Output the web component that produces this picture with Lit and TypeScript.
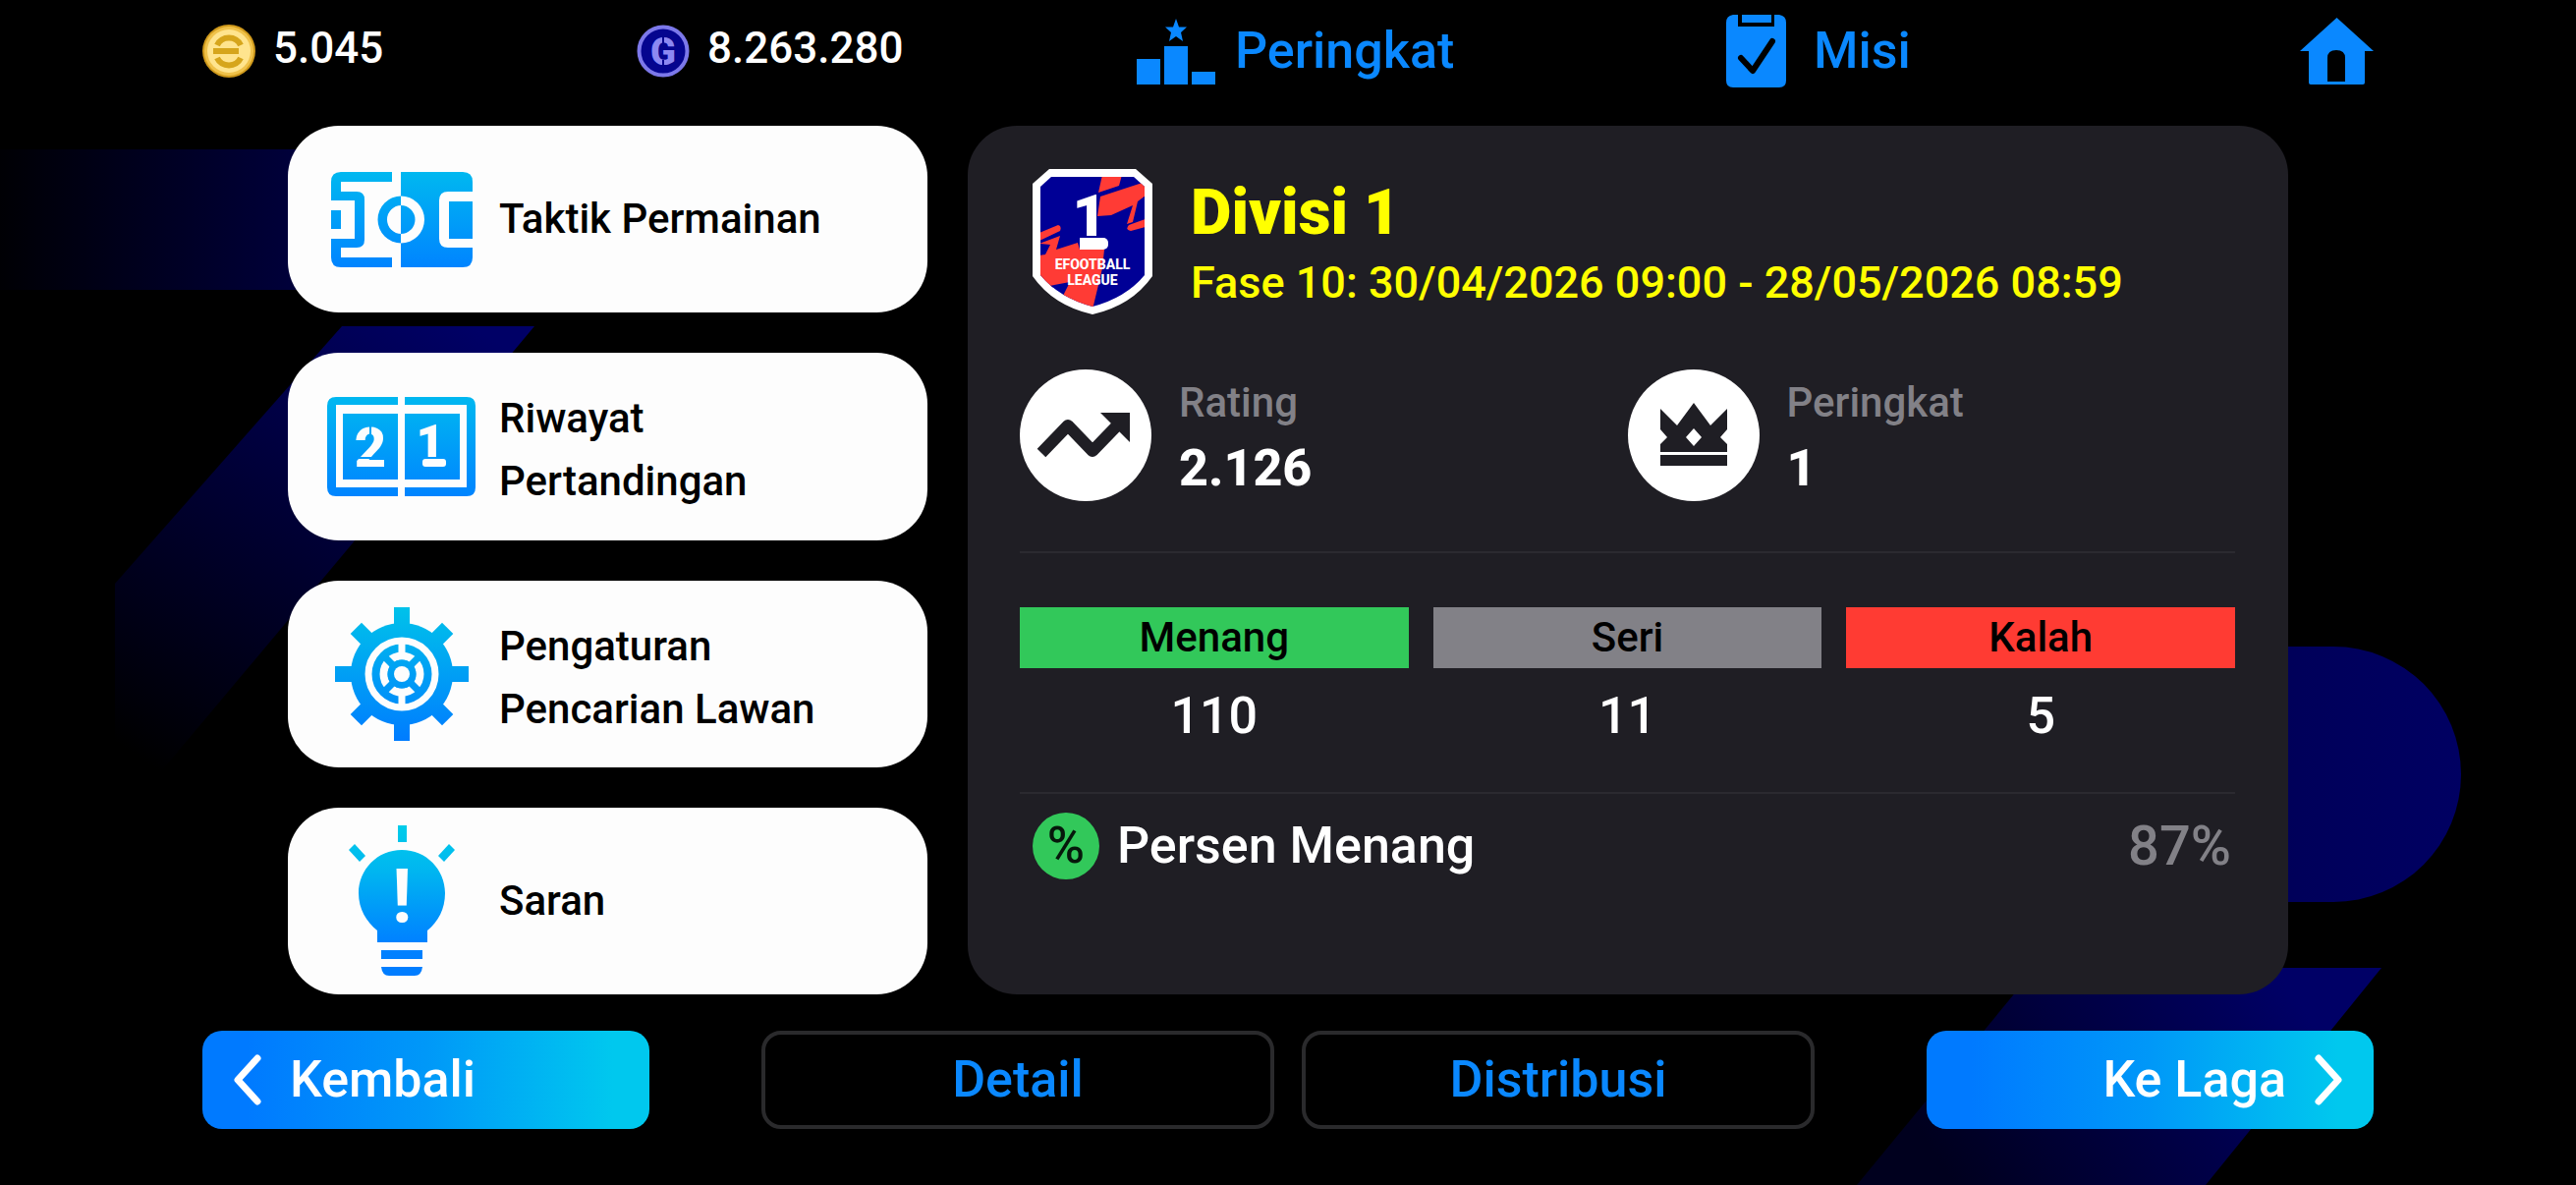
import { LitElement, html, css } from "lit";
import { customElement, property } from "lit/decorators.js";

const pitchIcon = html`
  <svg width="144" height="97" viewBox="0 0 144 97" aria-hidden="true">
    <defs>
      <linearGradient id="pitch" gradientUnits="userSpaceOnUse" x1="0" y1="0" x2="0" y2="97">
        <stop offset="0" stop-color="#00b8f0" />
        <stop offset="1" stop-color="#0084ff" />
      </linearGradient>
    </defs>
    <g fill="url(#pitch)">
      <path d="M62 0H10Q0 0 0 10V29H24V68H0V87Q0 97 10 97H62V87H10V77H26Q34 77 34 69V28Q34 20 26 20H10V10H62Z" />
      <rect x="0" y="39" width="10" height="19" />
      <path fill-rule="evenodd" d="M71 0H134Q144 0 144 10V20H119Q110 20 110 29V68Q110 77 119 77H144V87Q144 97 134 97H71Z" />
      <rect x="120" y="30" width="24" height="38" />
      <path d="M71.5 24.5A24 24 0 0 0 71.5 72.5V63A14.5 14.5 0 0 1 71.5 34Z" />
    </g>
    <path fill="#fdfdfd" d="M71 24.5A24 24 0 0 1 71 72.5V63A14.5 14.5 0 0 0 71 34Z" />
  </svg>`;

const scoreIcon = html`
  <svg width="151" height="101" viewBox="0 0 151 101" aria-hidden="true">
    <defs>
      <linearGradient id="score" gradientUnits="userSpaceOnUse" x1="0" y1="0" x2="0" y2="101">
        <stop offset="0" stop-color="#00b8f0" />
        <stop offset="1" stop-color="#0084ff" />
      </linearGradient>
    </defs>
    <g fill="url(#score)">
      <path d="M72 0H9Q0 0 0 9V92Q0 101 9 101H72V92H9V8H72Z" />
      <path d="M79 0H142Q151 0 151 9V92Q151 101 142 101H79V92H142V8H79Z" />
      <rect x="16" y="17" width="56" height="67" />
      <rect x="79" y="17" width="56" height="67" />
    </g>
    <g class="digits">
      <text x="44" y="71">2</text>
      <text x="105" y="64" class="one">1</text>
    </g>
    <rect x="97" y="63" width="24" height="8" rx="3" fill="#fdfdfd" />
    <rect x="31" y="61" width="28" height="2" fill="#0398fb" />
    <rect x="95" y="61" width="28" height="2" fill="#0398fb" />
    <rect x="43" y="28" width="2" height="10" fill="#02a5f6" />
  </svg>`;

const gearIcon = html`
  <svg width="136" height="136" viewBox="-68 -68 136 136" aria-hidden="true">
    <defs>
      <linearGradient id="gear" gradientUnits="userSpaceOnUse" x1="0" y1="-68" x2="0" y2="68">
        <stop offset="0" stop-color="#00c2ea" />
        <stop offset="1" stop-color="#007cff" />
      </linearGradient>
      <mask id="gearMask" maskUnits="userSpaceOnUse" x="-70" y="-70" width="140" height="140">
        <g fill="#fff">
          <circle r="52" />
          <rect x="-8" y="-68" width="16" height="136" />
          <rect x="-68" y="-8" width="136" height="16" />
          <rect x="-8" y="-66" width="16" height="132" transform="rotate(45)" />
          <rect x="-8" y="-66" width="16" height="132" transform="rotate(-45)" />
        </g>
        <circle r="34" fill="none" stroke="#000" stroke-width="7" />
        <path d="M0 -36V-18M0 18V36" stroke="#000" stroke-width="7" />
        <circle r="18.5" fill="none" stroke="#000" stroke-width="8" />
        <path d="M-20 -20L20 20M-20 20L20 -20" stroke="#fff" stroke-width="7" />
        <circle r="14.5" fill="#fff" />
        <circle r="8" fill="#000" />
      </mask>
    </defs>
    <rect x="-68" y="-68" width="136" height="136" fill="url(#gear)" mask="url(#gearMask)" />
  </svg>`;

const bulbIcon = html`
  <svg width="110" height="153" viewBox="0 0 110 153" aria-hidden="true">
    <defs>
      <linearGradient id="bulb" gradientUnits="userSpaceOnUse" x1="0" y1="0" x2="0" y2="153">
        <stop offset="0" stop-color="#00cdea" />
        <stop offset="0.3" stop-color="#00b6f0" />
        <stop offset="0.75" stop-color="#0084ff" />
        <stop offset="1" stop-color="#007cff" />
      </linearGradient>
    </defs>
    <g fill="url(#bulb)">
      <rect x="51" y="0" width="9" height="17" />
      <path d="M1 25L7 19L18 31L12 37Z" />
      <path d="M109 25L103 19L92 31L98 37Z" />
      <path d="M55 25C80 25 99 45 99 69C99 85 92 98 81 107V119H30V107C19 98 11 85 11 69C11 45 30 25 55 25Z" />
      <rect x="34" y="127" width="42" height="9" />
      <path d="M34 144H76Q75 153 68 153H42Q35 153 34 144Z" />
    </g>
    <text class="bang" x="55" y="98">!</text>
  </svg>`;

const trendIcon = html`
  <svg width="134" height="134" viewBox="0 0 134 134" aria-hidden="true">
    <circle cx="67" cy="67" r="67" fill="#fff" />
    <path d="M22 85L49 57L74 83L104 52" fill="none" stroke="#1f1e24" stroke-width="12" stroke-linejoin="round" />
    <path d="M82 44H112V74Z" fill="#1f1e24" />
  </svg>`;

const crownIcon = html`
  <svg width="134" height="134" viewBox="0 0 134 134" aria-hidden="true">
    <circle cx="67" cy="67" r="67" fill="#fff" />
    <path
      fill="#1f1e24"
      fill-rule="evenodd"
      d="M33 40L50 57L67 34L84 57L101 40V61L94 69L101 76V84H33V76L40 69L33 61ZM67 60L59 69L67 78L75 69Z"
    />
    <rect x="33" y="87" width="68" height="11" fill="#1f1e24" />
  </svg>`;

const leagueBadge = html`
  <svg class="badge" width="122" height="148" viewBox="0 0 122 148" role="img" aria-label="eFootball League 1">
    <defs>
      <clipPath id="shield">
        <path d="M8 18L19 8H103L114 18V108Q95 131 61 140Q27 131 8 108Z" />
      </clipPath>
    </defs>
    <path fill="#fff" d="M0 15L17 0H105L122 15V109Q101 139 61 148Q21 139 0 109Z" />
    <g clip-path="url(#shield)">
      <rect width="122" height="148" fill="#000096" />
      <g fill="#ff3b35">
        <path d="M71 6H91L88 17L67 24Z" />
        <path d="M69 28L115 13V27L107 33L102 54L96 56L102 37L80 47L66 48Z" />
        <path d="M98 57L115 51V59L100 63Q94 62 98 57Z" />
        <path d="M7 65L26 57Q30 58 28 63L7 73Z" />
        <path d="M7 76L28 68L24 82L46 75L48 82H73L71 101L67 118L61 143L30 131L38 115L22 118L15 126L7 116V88L13 87L18 77Z" />
      </g>
      <path d="M8 121L22 118L18 128Z" fill="#000096" />
    </g>
    <text class="badge-number" x="58" y="68">1</text>
    <rect x="48" y="70" width="29" height="12" rx="5" fill="#fff" />
    <rect x="48" y="70" width="12" height="12" fill="#fff" />
    <text class="badge-name" x="61" y="102">EFOOTBALL</text>
    <text class="badge-name" x="61" y="118">LEAGUE</text>
  </svg>`;

const goldCoin = html`
  <svg width="54" height="54" viewBox="-27 -27 54 54" aria-hidden="true">
    <circle r="27" fill="#d09a1c" />
    <circle r="25" fill="#f0c24a" />
    <circle r="22" fill="#ffe48e" />
    <g fill="none" stroke="#d6a51c" stroke-width="6">
      <path d="M-12 -6A13 12 0 0 1 12 -6" />
      <path d="M-12 7A13 12 0 0 0 12 7" />
      <path d="M-16 0H10" />
    </g>
  </svg>`;

const gCoin = html`
  <svg width="54" height="54" viewBox="-27 -27 54 54" aria-hidden="true">
    <circle r="24.5" fill="#05058f" stroke="#7c78ea" stroke-width="4" />
    <text class="coin-letter" x="0" y="14">G</text>
    <path d="M0 -16V-8M0 9V17" stroke="#05058f" stroke-width="2" />
  </svg>`;

const podiumIcon = html`
  <svg width="80" height="67" viewBox="0 0 80 67" aria-hidden="true">
    <g fill="#0a88ff">
      <rect x="0" y="41" width="24" height="26" />
      <rect x="28" y="28" width="24" height="39" />
      <rect x="56" y="54" width="24" height="13" />
      <path d="M40 0L43 8.5H51L45 14L47 23L40 18L33 23L35 14L29 8.5H37Z" />
    </g>
  </svg>`;

const clipboardIcon = html`
  <svg width="61" height="74" viewBox="0 0 61 74" aria-hidden="true">
    <path fill="#0a88ff" d="M7 0H12V12H49V0H54Q61 1 61 8V67Q61 74 54 74H7Q0 74 0 67V8Q0 1 7 0Z" />
    <rect x="16" y="0" width="30" height="8" fill="#0a88ff" />
    <path d="M15 44L27 57L47 27" fill="none" stroke="#000" stroke-width="6" stroke-linejoin="round" stroke-linecap="round" />
  </svg>`;

const homeIcon = html`
  <svg width="75" height="68" viewBox="0 0 75 68" aria-hidden="true">
    <path
      fill="#0a88ff"
      fill-rule="evenodd"
      d="M37.5 0L75 34H66V66Q66 68 64 68H11Q9 68 9 66V34H0ZM28 65H46V41Q46 33 37 33Q28 33 28 41Z"
    />
  </svg>`;

const chevron = (d: string) => html`
  <svg width="32" height="56" viewBox="0 0 32 56" aria-hidden="true">
    <path d=${d} fill="none" stroke="#fff" stroke-width="7" stroke-linecap="round" stroke-linejoin="round" />
  </svg>`;

const actions = [
  { icon: pitchIcon, lines: ["Taktik Permainan"] },
  { icon: scoreIcon, lines: ["Riwayat", "Pertandingan"] },
  { icon: gearIcon, lines: ["Pengaturan", "Pencarian Lawan"] },
  { icon: bulbIcon, lines: ["Saran"] },
];

const results = [
  { label: "Menang", value: "110", tone: "win" },
  { label: "Seri", value: "11", tone: "draw" },
  { label: "Kalah", value: "5", tone: "loss" },
];

@customElement("app-backdrop")
class AppBackdrop extends LitElement {
  static styles = css`
    :host {
      position: absolute;
      inset: 0;
      z-index: -1;
    }
    svg {
      display: block;
      width: 100%;
      height: 100%;
    }
  `;

  render() {
    return html`
      <svg viewBox="0 0 2622 1206" preserveAspectRatio="none" aria-hidden="true">
        <defs>
          <linearGradient id="bar" gradientUnits="userSpaceOnUse" x1="0" y1="0" x2="320" y2="0">
            <stop offset="0" stop-color="#000004" />
            <stop offset="1" stop-color="#00003e" />
          </linearGradient>
          <linearGradient id="slash" gradientUnits="userSpaceOnUse" x1="450" y1="310" x2="140" y2="770">
            <stop offset="0" stop-color="#000066" />
            <stop offset="1" stop-color="#000000" />
          </linearGradient>
          <linearGradient id="pill" gradientUnits="userSpaceOnUse" x1="2300" y1="0" x2="2505" y2="0">
            <stop offset="0" stop-color="#000058" />
            <stop offset="1" stop-color="#000062" />
          </linearGradient>
          <linearGradient id="foot" gradientUnits="userSpaceOnUse" x1="2320" y1="990" x2="1990" y2="1206">
            <stop offset="0" stop-color="#000066" />
            <stop offset="1" stop-color="#00001e" />
          </linearGradient>
        </defs>
        <rect x="0" y="152" width="340" height="143" fill="url(#bar)" />
        <path d="M348 332H544L160 790L117 830V594Z" fill="url(#slash)" />
        <path d="M2280 658H2375A130 130 0 0 1 2375 918H2280Z" fill="url(#pill)" />
        <path d="M2072 985H2424L2245 1206H1890Z" fill="url(#foot)" />
      </svg>
    `;
  }
}

@customElement("metric-item")
class MetricItem extends LitElement {
  @property() label = "";
  @property() value = "";

  static styles = css`
    :host {
      display: flex;
      gap: 28px;
      align-items: center;
    }
    ::slotted(svg) {
      display: block;
      flex: none;
    }
    p {
      margin: 0;
      line-height: 67px;
    }
    .label {
      color: #828187;
      font-size: 42px;
      font-weight: 500;
    }
    .value {
      color: #fff;
      font-size: 52px;
      font-weight: 800;
    }
  `;

  render() {
    return html`
      <slot></slot>
      <div>
        <p class="label">${this.label}</p>
        <p class="value">${this.value}</p>
      </div>
    `;
  }
}

@customElement("app-root")
class AppRoot extends LitElement {
  static styles = css`
    :host {
      position: relative;
      isolation: isolate;
      display: flex;
      flex-direction: column;
      box-sizing: border-box;
      min-height: 100vh;
      overflow: hidden;
      background: #000;
      color: #fff;
      font-family: Roboto, "Liberation Sans", sans-serif;
      font-weight: 500;
    }
    * {
      box-sizing: border-box;
    }
    svg {
      display: block;
      flex: none;
    }
    button,
    a {
      font: inherit;
      color: inherit;
      text-decoration: none;
      cursor: pointer;
    }

    .top {
      display: grid;
      grid-template-columns: 442fr 509fr 600fr 659fr;
      align-items: center;
      padding: 6px 206px 30px;
      min-height: 128px;
    }
    .amount {
      display: flex;
      align-items: center;
      gap: 18px;
      font-size: 44px;
      line-height: 60px;
    }
    .amount span {
      padding-bottom: 6px;
    }
    .link {
      display: flex;
      align-items: center;
      justify-self: start;
      gap: 20px;
      color: #0a88ff;
      font-size: 52px;
      line-height: 72px;
    }
    .link.wide {
      gap: 28px;
    }
    .last {
      display: flex;
      align-items: center;
      justify-content: space-between;
    }
    .coin-letter {
      fill: #8c88f2;
      font-size: 38px;
      font-weight: 900;
      text-anchor: middle;
    }

    main {
      flex: 1;
      display: grid;
      grid-template-columns: 651fr 1344fr;
      gap: 41px;
      padding: 0 293px;
    }
    .menu {
      display: grid;
      grid-auto-rows: 1fr;
      gap: 41px;
      margin: 0;
      padding: 0;
      list-style: none;
    }
    .menu li {
      display: grid;
    }
    .tile {
      display: grid;
      grid-template-columns: 151px 1fr;
      align-items: center;
      gap: 24px;
      min-height: 190px;
      padding: 0 24px 0 40px;
      border: 0;
      border-radius: 52px;
      background: #fdfdfd;
      color: #000;
      font-size: 42px;
      line-height: 64px;
      text-align: left;
    }
    .tile svg {
      justify-self: center;
    }
    .tile span {
      display: block;
    }
    .pair {
      padding-top: 8px;
    }
    .digits {
      fill: #fdfdfd;
      font-size: 56px;
      font-weight: 900;
      text-anchor: middle;
    }
    .digits .one {
      font-size: 50px;
    }
    .bang {
      fill: #fdfdfd;
      font-size: 76px;
      font-weight: 700;
      text-anchor: middle;
    }

    .panel {
      padding: 44px 54px 0 53px;
      border-radius: 50px;
      background: #1f1e24;
    }
    .division {
      display: flex;
      align-items: flex-end;
      gap: 39px;
      padding-left: 13px;
      color: #ff0;
    }
    .badge-number {
      fill: #fff;
      font-size: 60px;
      font-weight: 900;
      text-anchor: middle;
    }
    .badge-name {
      fill: #fff;
      font-size: 14px;
      font-weight: 800;
      text-anchor: middle;
    }
    h1,
    .division p {
      margin: 0;
    }
    h1 {
      font-size: 64px;
      font-weight: 900;
      line-height: 78px;
    }
    .division p {
      font-size: 45px;
      line-height: 64px;
    }
    .metrics {
      display: grid;
      grid-template-columns: 1fr 1fr;
      padding: 56px 0 51px;
      border-bottom: 2px solid #2b2a30;
    }
    .results {
      display: grid;
      grid-template-columns: repeat(3, 1fr);
      gap: 25px;
      margin: 0;
      padding: 55px 0 28px;
      border-bottom: 2px solid #2b2a30;
      text-align: center;
    }
    .results dt {
      color: #000;
      font-size: 42px;
      line-height: 62px;
    }
    .results dd {
      margin: 0;
      font-size: 52px;
      line-height: 98px;
    }
    .win {
      background: #32c85a;
    }
    .draw {
      background: #828187;
    }
    .loss {
      background: #ff3b33;
    }
    .ratio {
      display: flex;
      align-items: center;
      gap: 18px;
      padding: 0 4px 0 13px;
      font-size: 52px;
      line-height: 106px;
    }
    .percent {
      width: 68px;
      border-radius: 50%;
      background: #32c85a;
      color: #06180b;
      line-height: 68px;
      text-align: center;
    }
    .ratio output {
      margin-left: auto;
      color: #828187;
      font-size: 56px;
    }

    .bottom {
      display: grid;
      grid-template-columns: 455fr 1072fr 455fr;
      gap: 114px;
      padding: 37px 206px 57px;
    }
    .middle {
      display: grid;
      grid-template-columns: 1fr 1fr;
      gap: 28px;
    }
    .bottom button {
      min-height: 100px;
      border-radius: 20px;
      font-size: 52px;
      line-height: 60px;
    }
    .outline {
      border: 4px solid #2a2a2c;
      background: #000;
      color: #0a88ff;
    }
    .solid {
      display: flex;
      align-items: center;
      gap: 27px;
      padding: 0 30px;
      border: 0;
      background: linear-gradient(90deg, #007aff 10%, #0098f8 50%, #00c8ee 92%);
      color: #fff;
    }
    .forward {
      justify-content: flex-end;
    }
  `;

  render() {
    return html`
      <app-backdrop></app-backdrop>

      <header class="top">
        <div class="amount">${goldCoin}<span>5.045</span></div>
        <div class="amount">${gCoin}<span>8.263.280</span></div>
        <a class="link" href="#peringkat">${podiumIcon}Peringkat</a>
        <div class="last">
          <a class="link wide" href="#misi">${clipboardIcon}Misi</a>
          <a href="#beranda" aria-label="Beranda">${homeIcon}</a>
        </div>
      </header>

      <main>
        <ul class="menu">
          ${actions.map(
            (action) => html`
              <li>
                <button class="tile">
                  ${action.icon}
                  <div class=${action.lines.length > 1 ? "pair" : "single"}>
                    ${action.lines.map((line) => html`<span>${line}</span>`)}
                  </div>
                </button>
              </li>
            `
          )}
        </ul>

        <section class="panel">
          <div class="division">
            ${leagueBadge}
            <div>
              <h1>Divisi 1</h1>
              <p>Fase 10: 30/04/2026 09:00 - 28/05/2026 08:59</p>
            </div>
          </div>

          <div class="metrics">
            <metric-item label="Rating" value="2.126">${trendIcon}</metric-item>
            <metric-item label="Peringkat" value="1">${crownIcon}</metric-item>
          </div>

          <dl class="results">
            ${results.map(
              (result) => html`
                <div>
                  <dt class=${result.tone}>${result.label}</dt>
                  <dd>${result.value}</dd>
                </div>
              `
            )}
          </dl>

          <div class="ratio">
            <span class="percent" aria-hidden="true">%</span>
            <span>Persen Menang</span>
            <output>87%</output>
          </div>
        </section>
      </main>

      <footer class="bottom">
        <button class="solid">${chevron("M26 6L6 28L26 50")}Kembali</button>
        <div class="middle">
          <button class="outline">Detail</button>
          <button class="outline">Distribusi</button>
        </div>
        <button class="solid forward">Ke Laga${chevron("M6 6L26 28L6 50")}</button>
      </footer>
    `;
  }
}
